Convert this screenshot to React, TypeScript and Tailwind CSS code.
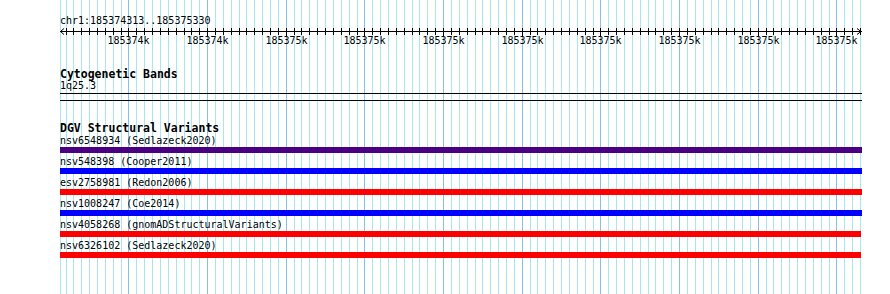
const START = 185374313;
const END = 185375330;
const LEFT = 60;
const PX = 800 / (END - START);

const xOf = (bp: number) => LEFT + (bp - START) * PX;

const gridBps: number[] = [];
for (let bp = Math.ceil(START / 10) * 10; bp <= END; bp += 10) gridBps.push(bp);

const majorLabels = [
  "185374k",
  "185374k",
  "185375k",
  "185375k",
  "185375k",
  "185375k",
  "185375k",
  "185375k",
  "185375k",
  "185375k",
];

const variants = [
  { name: "nsv6548934 (Sedlazeck2020)", color: "bg-[#4b0082]", w: "w-[802px]" },
  { name: "nsv548398 (Cooper2011)", color: "bg-[#0000ff]", w: "w-[802px]" },
  { name: "esv2758981 (Redon2006)", color: "bg-[#ff0000]", w: "w-[802px]" },
  { name: "nsv1008247 (Coe2014)", color: "bg-[#0000ff]", w: "w-[802px]" },
  { name: "nsv4058268 (gnomADStructuralVariants)", color: "bg-[#ff0000]", w: "w-[801px]" },
  { name: "nsv6326102 (Sedlazeck2020)", color: "bg-[#ff0000]", w: "w-[801px]" },
];

// background grid, one line per 10bp, darker every 100bp
function GridLines() {
  return (
    <svg className="absolute inset-0" width={890} height={294} shapeRendering="crispEdges">
      <line x1={60.5} x2={60.5} y1={0} y2={294} stroke="#a8e7ef" />
      {gridBps.map((bp) => {
        const x = Math.round(xOf(bp)) + 0.5;
        const major = bp % 100 === 0;
        return (
          <line key={bp} x1={x} x2={x} y1={0} y2={294} stroke={major ? "#80c4ea" : "#a8e7ef"} />
        );
      })}
    </svg>
  );
}

function Ruler() {
  const y = 4.5;
  return (
    <svg width={810} height={21} className="block">
      <g transform="translate(-60,0)" shapeRendering="crispEdges">
        <line x1={60} x2={862} y1={y} y2={y} stroke="#000" />
        {gridBps.map((bp) => {
          const x = Math.round(xOf(bp)) + 0.5;
          const major = bp % 100 === 0;
          return <line key={bp} x1={x} x2={x} y1={1} y2={major ? 9 : 8} stroke="#000" />;
        })}
      </g>
      <g transform="translate(-60,0)" fill="none" stroke="#000">
        <polyline points="64,1.5 60.5,4.5 64,7.5" />
        <polyline points="857,1.5 861,4.5 857,7.5" />
      </g>
      <g transform="translate(-60,0)">
        {majorLabels.map((label, i) => (
          <text
            key={i}
            x={Math.round(xOf(185374400 + i * 100)) + 0.5}
            y={17}
            textAnchor="middle"
            fontFamily="'DejaVu Sans Mono', monospace"
            fontSize={10}
            fill="#000"
          >
            {label}
          </text>
        ))}
      </g>
    </svg>
  );
}

export default function App() {
  return (
    <div className="relative w-[890px] h-[294px] bg-white overflow-hidden text-black font-['DejaVu_Sans_Mono',monospace]">
      <GridLines />
      <div className="relative pl-[60px] pt-[15px]">
        <div className="text-[10px] leading-[12px] h-[12px] whitespace-nowrap">chr1:185374313..185375330</div>
        <Ruler />

        <div className="mt-[21px] text-[11.5px] leading-[11px] h-[11px] font-bold whitespace-nowrap">
          Cytogenetic Bands
        </div>
        <div className="text-[10px] leading-[11px] h-[11px] whitespace-nowrap">1q25.3</div>
        <div className="mt-[2px] w-[802px] h-px bg-black" />
        <div className="mt-[6px] w-[802px] h-px bg-black" />

        <div className="mt-[21px] text-[11.5px] leading-[13px] h-[13px] font-bold whitespace-nowrap">
          DGV Structural Variants
        </div>
        <div className="flex flex-col">
          {variants.map((v) => (
            <div key={v.name} className="mb-[3px]">
              <div className="text-[10px] leading-[12px] h-[12px] whitespace-nowrap">{v.name}</div>
              <div className={`h-[6px] ${v.w} ${v.color}`} />
            </div>
          ))}
        </div>
      </div>
    </div>
  );
}
